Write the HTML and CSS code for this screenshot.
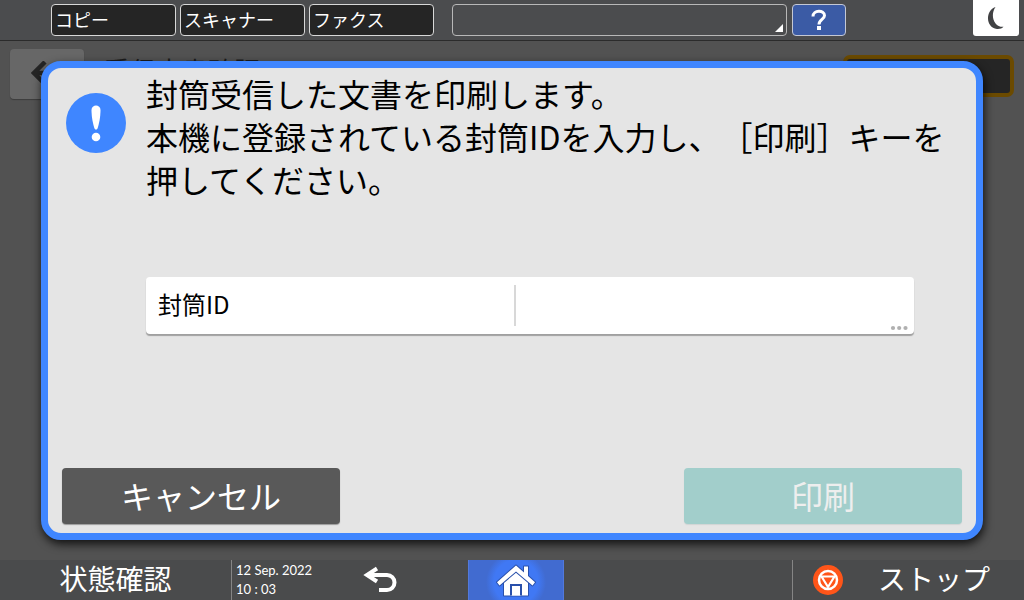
FILE: index.html
```html
<!DOCTYPE html>
<html lang="ja">
<head>
<meta charset="utf-8">
<meta name="viewport" content="width=device-width, initial-scale=1">
<title>封筒受信文書の印刷</title>
<link rel="stylesheet" href="styles.css">
</head>
<body>
<header class="topbar">
  <nav class="functions">
    <button class="function" type="button">コピー</button>
    <button class="function" type="button">スキャナー</button>
    <button class="function" type="button">ファクス</button>
  </nav>
  <button class="message-box" type="button" aria-label="システムメッセージ">
    <svg width="8" height="8" viewBox="0 0 8 8" aria-hidden="true"><path d="M8 0v8H0z" fill="#fff"/></svg>
  </button>
  <button class="help" type="button" aria-label="ヘルプ">
    <svg width="16" height="22" viewBox="0 0 16 22" aria-hidden="true"><path d="M2 7.500C2 .8 13.500 .8 13.500 6.500C13.500 10.500 8 10.500 8 15.500" fill="none" stroke="#fff" stroke-width="3"/><path d="M6 17h4v4H6z" fill="#fff"/></svg>
  </button>
  <button class="sleep" type="button" aria-label="スリープ">
    <svg width="20" height="24" viewBox="0 0 20 24" aria-hidden="true"><path d="M9.500 1C-1 4.500-.5 22 11 23c3 .2 5-.7 6.500-2.200C8.500 21.500 3.500 10 9.500 1z" fill="#414244"/></svg>
  </button>
</header>

<main class="screen">
  <div class="page-head" aria-hidden="true">
    <div class="page-back">
      <svg width="24" height="24" viewBox="0 0 24 24"><path d="M14 1L3 12l11 11M4 12h20" fill="none" stroke="#252525" stroke-width="4.500"/></svg>
    </div>
    <div class="page-title">受信文書確認</div>
    <div class="page-action"></div>
  </div>

  <section class="dialog" role="dialog" aria-labelledby="message">
    <div class="notice">
      <svg class="notice-icon" width="60" height="60" viewBox="0 0 60 60" aria-hidden="true"><circle cx="30" cy="30" r="30" fill="#3f86ff"/><path d="M25.500 17c0-6 9-6 9 0 0 7-1.500 14-3 18.500-.5 1.500-2.500 1.500-3 0-1.500-4.500-3-11.500-3-18.500z" fill="#fff"/><circle cx="30" cy="44" r="4.300" fill="#fff"/></svg>
      <p class="notice-text" id="message">封筒受信した文書を印刷します。<br>本機に登録されている封筒IDを入力し、［印刷］キーを押してください。</p>
    </div>
    <div class="field">
      <label class="field-label" for="envelope">封筒ID</label>
      <input class="field-input" id="envelope" type="text">
      <svg class="field-more" width="18" height="6" viewBox="0 0 18 6" aria-hidden="true"><g fill="#b0b0b0"><circle cx="3" cy="3" r="2.100"/><circle cx="9.200" cy="3" r="2.100"/><circle cx="15.500" cy="3" r="2.100"/></g></svg>
    </div>
    <div class="actions">
      <button class="action cancel" type="button">キャンセル</button>
      <button class="action print" type="button" disabled>印刷</button>
    </div>
  </section>
</main>

<footer class="bottombar">
  <button class="bar-button status" type="button">状態確認</button>
  <div class="clock"><span>12 Sep. 2022</span><span>10 : 03</span></div>
  <button class="bar-button return" type="button" aria-label="戻る">
    <svg width="34" height="28" viewBox="0 0 34 28" aria-hidden="true"><path d="M5 9H24a7.500 7.500 0 0 1 0 15H16" fill="none" stroke="#fff" stroke-width="4"/><path d="M14 2.500L4 9l10 6.500" fill="none" stroke="#fff" stroke-width="4"/></svg>
  </button>
  <button class="bar-button home" type="button" aria-label="ホーム">
    <svg width="40" height="34" viewBox="0 0 40 34" aria-hidden="true"><g stroke="#2950ab" stroke-width="2" stroke-linejoin="round" paint-order="stroke" fill="#fff"><path d="M8 17L20 8l12 9v14.500H8z"/><path d="M20 1.500l8 7V2.500h4v9.500l7 6.200-2.500 3.300L20 7.500 3.500 21.500 1 18.200z"/></g><path d="M15 31.500V21h10v10.500" fill="#fff" stroke="#2950ab" stroke-width="2"/></svg>
  </button>
  <button class="bar-button stop" type="button">
    <svg width="32" height="32" viewBox="0 0 32 32" aria-hidden="true"><circle cx="16" cy="16" r="15" fill="#ff5519"/><circle cx="16" cy="16" r="9" fill="none" stroke="#fff" stroke-width="2.500"/><path d="M9.500 12.500h13L16 23z" fill="none" stroke="#fff" stroke-width="2.200" stroke-linejoin="round"/></svg>
    <span>ストップ</span>
  </button>
</footer>
</body>
</html>
```
FILE: styles.css
```css
* {
  box-sizing: border-box;
}

body {
  margin: 0;
  min-height: 100vh;
  display: flex;
  flex-direction: column;
  background: #525252;
  color: #000;
  font-family: "Noto Sans CJK JP", sans-serif;
  font-weight: 400;
  text-spacing-trim: space-all;
}

button,
input {
  margin: 0;
  padding: 0;
  border: 0;
  background: none;
  color: inherit;
  font: inherit;
}

svg {
  display: block;
}

.topbar {
  display: flex;
  align-items: flex-start;
  height: 41px;
  padding: 0 5px 0 51px;
  background: #4b4c4e;
  border-bottom: 1px solid #2b2b2b;
}

.functions {
  display: flex;
  gap: 4px;
  margin: 4px 18px 0 0;
}

.function {
  width: 125px;
  height: 32px;
  padding: 0 3px 2px;
  border: 1px solid #d8d8d8;
  border-radius: 4px;
  background: #252525;
  color: #fff;
  font-size: 18px;
  line-height: 26px;
  text-align: left;
}

.message-box {
  display: flex;
  flex: 0 1 335px;
  height: 32px;
  margin: 4px 5px 0 0;
  padding: 3px;
  justify-content: flex-end;
  align-items: flex-end;
  border: 1px solid #b8b8b8;
  border-radius: 4px;
}

.help {
  display: flex;
  width: 54px;
  height: 32px;
  margin-top: 4px;
  justify-content: center;
  align-items: center;
  border: 1px solid #c4c8d4;
  border-radius: 4px;
  background: #3b5ba5;
}

.sleep {
  display: flex;
  width: 46px;
  height: 36px;
  margin-left: auto;
  justify-content: center;
  align-items: center;
  border-radius: 0 0 3px 3px;
  background: #fff;
}

.screen {
  position: relative;
  display: flex;
  flex: 1;
  padding: 20px 41px;
}

.page-head {
  position: absolute;
  inset: 0 10px auto;
  display: flex;
  align-items: flex-start;
  gap: 20px;
  padding-top: 8px;
}

.page-back {
  width: 74px;
  height: 50px;
  padding: 12px 21px;
  border-radius: 4px;
  background: #676767;
  box-shadow: 0 1px 1px #3c3c3c;
}

.page-title {
  color: #1c1c1c;
  font-size: 26px;
  line-height: 42px;
}

.page-action {
  width: 171px;
  height: 42px;
  margin: 6px 0 0 auto;
  border: 4px solid #6b4a00;
  border-radius: 7px;
  background: #252525;
}

.dialog {
  position: relative;
  display: flex;
  flex: 1;
  flex-direction: column;
  padding: 4px 14px 9px;
  border: 7px solid #3f86ff;
  border-radius: 20px;
  background: #e5e5e5;
  box-shadow: 1px 4px 10px rgba(0, 0, 0, 0.8);
}

.notice {
  display: flex;
  gap: 20px;
  padding-left: 4px;
}

.notice-icon {
  flex: none;
  margin-top: 21px;
}

.notice-text {
  margin: 0;
  font-size: 32px;
  line-height: 43px;
}

.field {
  position: relative;
  display: flex;
  align-items: center;
  height: 57px;
  margin: 76px 48px 0 84px;
  border-radius: 4px;
  background: #fff;
  box-shadow: 0 2px 1px #a0a0a0;
}

.field-label {
  flex: 1;
  padding: 0 0 4px 12px;
  font-size: 24px;
}

.field-input {
  flex: 1;
  min-width: 0;
  height: 41px;
  margin-right: 18px;
  padding: 0 12px;
  border-left: 2px solid #d8d8d8;
  font-size: 24px;
  outline: none;
}

.field-more {
  position: absolute;
  right: 6px;
  bottom: 3px;
}

.actions {
  display: flex;
  justify-content: space-between;
  margin-top: auto;
}

.action {
  width: 278px;
  height: 56px;
  padding-bottom: 2px;
  border-radius: 4px;
  color: #fff;
  font-size: 32px;
  line-height: 54px;
}

.cancel {
  background: #595959;
  box-shadow: 0 1px 1px #999;
}

.print {
  background: #a2cecb;
  color: #eee;
  box-shadow: 0 1px 1px #d0d4d4;
}

.bottombar {
  display: grid;
  grid-template-columns: 231fr 92fr 145fr 96fr 228fr 232fr;
  height: 40px;
  background: #4a4b4c;
  color: #fff;
}

.bar-button {
  display: flex;
  justify-content: center;
  align-items: center;
  min-width: 0;
}

.status {
  padding-bottom: 4px;
  font-size: 28px;
  line-height: 36px;
}

.clock {
  display: flex;
  flex-direction: column;
  padding: 1px 0 0 4px;
  border-left: 1px solid #858585;
  font-family: Lato, sans-serif;
  font-size: 13px;
  line-height: 19px;
  white-space: nowrap;
}

.return {
  padding-right: 31px;
  padding-bottom: 1px;
}

.home {
  padding-top: 1px;
  border: solid #5279dc;
  border-width: 0 1px;
  background: radial-gradient(circle at 50% 55%, #4078f4 22px, #416bd0 30px);
}

.stop {
  grid-column: 6;
  justify-content: flex-start;
  gap: 34px;
  padding-left: 19px;
  border-left: 1px solid #858585;
  font-size: 28px;
  line-height: 36px;
}

.stop span {
  padding-bottom: 4px;
}
```
